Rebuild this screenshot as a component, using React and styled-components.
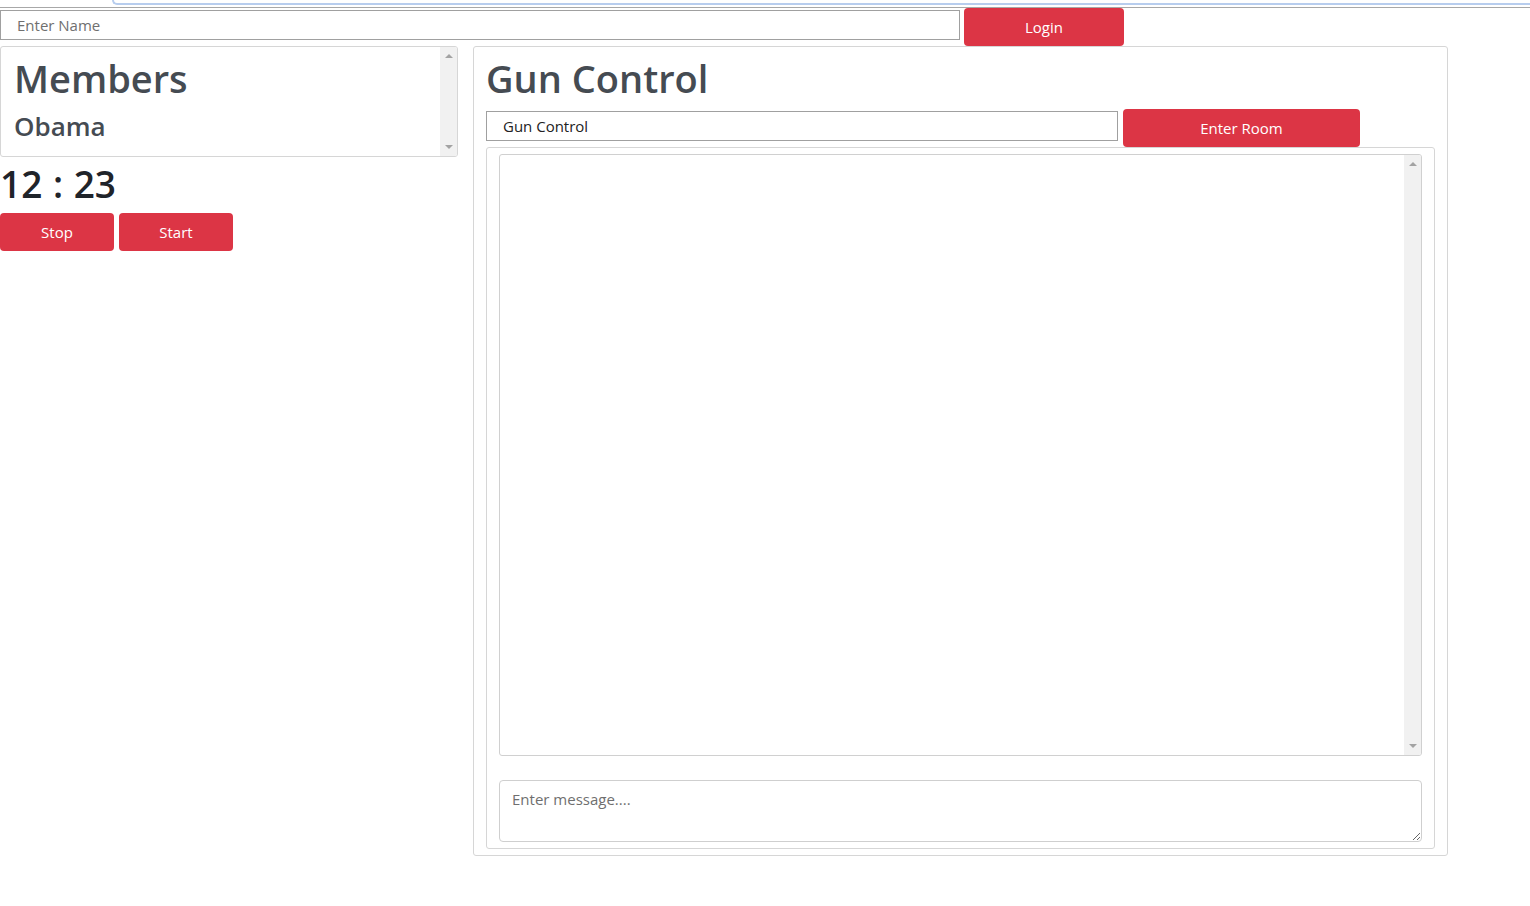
import styled, { createGlobalStyle } from "styled-components";

const GlobalStyle = createGlobalStyle`
  body {
    margin: 0;
    background: #fff;
    font-family: "Open Sans", "Noto Sans", sans-serif;
    color: #212529;
  }
  * {
    box-sizing: border-box;
  }
`;

const Page = styled.div`
  width: 1530px;
`;

const BrowserEdge = styled.div`
  height: 8px;
  border-bottom: 1px solid #a8a8a8;
  position: relative;
  &::before {
    content: "";
    position: absolute;
    left: 112px;
    right: 0;
    top: 0;
    height: 3px;
    border-bottom: 2px solid #b7cdee;
    border-left: 2px solid #b7cdee;
    border-bottom-left-radius: 6px;
  }
`;

const LoginBar = styled.div`
  display: flex;
  align-items: flex-start;
  gap: 4px;
`;

const TextInput = styled.input`
  width: ${(p) => p.width};
  height: 30px;
  margin-top: 2px;
  border: 1px solid #a0a0a0;
  padding: 0 16px;
  font-family: inherit;
  font-size: 15px;
  color: #222;
  outline: none;
  &::placeholder {
    color: #6f6f6f;
  }
`;

const RedButton = styled.button`
  width: ${(p) => p.width};
  height: 38px;
  border: none;
  border-radius: 4px;
  background: #dc3545;
  color: #fff;
  font-family: inherit;
  font-size: 15px;
  cursor: pointer;
`;

const Main = styled.div`
  display: flex;
  align-items: flex-start;
  gap: 15px;
`;

const LeftColumn = styled.div`
  width: 458px;
`;

// box with a classic (always visible) vertical scrollbar on its right side
const ScrollBox = styled.div`
  height: ${(p) => p.height};
  border: 1px solid ${(p) => p.border || "#d6d6d6"};
  border-radius: 3px;
  display: flex;
  overflow: hidden;
`;

const ScrollContent = styled.div`
  flex: 1;
  padding: ${(p) => p.pad || "0"};
  overflow: hidden;
`;

const ScrollTrack = styled.div`
  width: 17px;
  background: #f1f1f1;
  display: flex;
  flex-direction: column;
  justify-content: space-between;
  align-items: center;
  padding: 7px 0;
`;

const Arrow = styled.span`
  width: 0;
  height: 0;
  border-left: 4px solid transparent;
  border-right: 4px solid transparent;
  ${(p) =>
    p.down ? "border-top: 4px solid #a3a3a3;" : "border-bottom: 4px solid #a3a3a3;"}
`;

const BigTitle = styled.h1`
  margin: 0;
  font-size: 38px;
  font-weight: 600;
  line-height: 1.2;
  color: #454b52;
`;

const MemberName = styled.h3`
  margin: 9px 0 0;
  font-size: 26px;
  font-weight: 600;
  line-height: 1.2;
  color: #454b52;
`;

const Timer = styled.div`
  margin-top: 3px;
  font-size: 37px;
  font-weight: 600;
  line-height: 48px;
  word-spacing: 1px;
  color: #1f242a;
`;

const ButtonRow = styled.div`
  display: flex;
  gap: 5px;
  margin-top: 5px;
`;

const RoomPanel = styled.div`
  width: 975px;
  height: 810px;
  border: 1px solid #d6d6d6;
  border-radius: 3px;
  padding: 9px 12px 6px;
  display: flex;
  flex-direction: column;
`;

const RoomRow = styled.div`
  display: flex;
  align-items: flex-start;
  gap: 5px;
  margin-top: 7px;
`;

const ChatFrame = styled.div`
  flex: 1;
  border: 1px solid #d6d6d6;
  border-radius: 3px;
  padding: 6px 12px 6px;
  display: flex;
  flex-direction: column;
  gap: 24px;
`;

const MessageInput = styled.textarea`
  height: 62px;
  border: 1px solid #cfcfcf;
  border-radius: 4px;
  padding: 8px 12px;
  font-family: inherit;
  font-size: 15px;
  resize: vertical;
  outline: none;
  &::placeholder {
    color: #6f6f6f;
  }
`;

function Scrollbar() {
  return (
    <ScrollTrack>
      <Arrow />
      <Arrow down />
    </ScrollTrack>
  );
}

export default function App() {
  return (
    <Page>
      <GlobalStyle />
      <BrowserEdge />
      <LoginBar>
        <TextInput width="960px" placeholder="Enter Name" />
        <RedButton width="160px">Login</RedButton>
      </LoginBar>
      <Main>
        <LeftColumn>
          <ScrollBox height="111px">
            <ScrollContent pad="9px 13px">
              <BigTitle>Members</BigTitle>
              <MemberName>Obama</MemberName>
            </ScrollContent>
            <Scrollbar />
          </ScrollBox>
          <Timer>12 : 23</Timer>
          <ButtonRow>
            <RedButton width="114px">Stop</RedButton>
            <RedButton width="114px">Start</RedButton>
          </ButtonRow>
        </LeftColumn>
        <RoomPanel>
          <BigTitle>Gun Control</BigTitle>
          <RoomRow>
            <TextInput width="632px" defaultValue="Gun Control" />
            <RedButton width="237px">Enter Room</RedButton>
          </RoomRow>
          <ChatFrame>
            <ScrollBox height="602px" border="#d0d0d0">
              <ScrollContent />
              <Scrollbar />
            </ScrollBox>
            <MessageInput placeholder="Enter message...." />
          </ChatFrame>
        </RoomPanel>
      </Main>
    </Page>
  );
}
